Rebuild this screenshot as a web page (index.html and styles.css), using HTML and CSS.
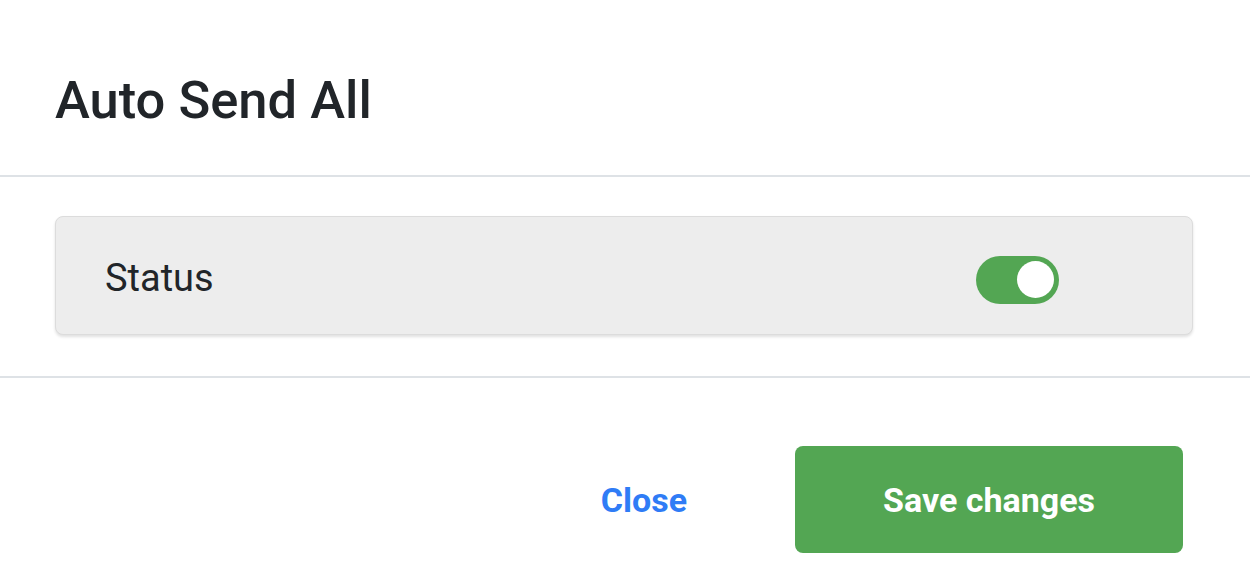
FILE: index.html
```html
<!DOCTYPE html>
<html lang="en">
<head>
<meta charset="utf-8">
<title>Auto Send All</title>
<link rel="stylesheet" href="styles.css">
</head>
<body>
<div class="modal">
  <header class="modal-header">
    <h1 class="modal-title">Auto Send All</h1>
  </header>
  <section class="modal-body">
    <div class="setting-card">
      <span class="setting-label">Status</span>
      <span class="toggle" role="switch" aria-checked="true"><span class="toggle-knob"></span></span>
    </div>
  </section>
  <footer class="modal-footer">
    <button class="btn-link" type="button">Close</button>
    <button class="btn-save" type="button">Save changes</button>
  </footer>
</div>
</body>
</html>
```
FILE: styles.css
```css
* { box-sizing: border-box; }
html, body { margin: 0; padding: 0; background: #fff; }
body {
  font-family: Roboto, "Liberation Sans", Arial, sans-serif;
  color: #212529;
  width: 1250px;
  height: 568px;
  overflow: hidden;
}
.modal-header {
  padding: 68px 55px 43px;
  border-bottom: 2px solid #dee2e6;
}
.modal-title {
  margin: 0;
  font-size: 52.5px;
  line-height: 64px;
  font-weight: 500;
  color: #212529;
}
.modal-body {
  padding: 39px 57px 41px 55px;
  border-bottom: 2px solid #dee2e6;
}
.setting-card {
  height: 119px;
  display: flex;
  align-items: center;
  padding: 0 0 0 49px;
  background: #ededed;
  border: 1px solid #dcdcdc;
  border-radius: 8px;
  box-shadow: 0 2px 3px rgba(0,0,0,0.12);
}
.setting-label {
  flex: 1;
  font-size: 38px;
  line-height: 44px;
  font-weight: 400;
  color: #212529;
  margin-top: 4px;
}
.toggle {
  width: 83px;
  height: 48px;
  margin: 8px 133px 0 0;
  border-radius: 24px;
  background: #53a653;
  display: flex;
  align-items: center;
  justify-content: flex-end;
  padding-right: 5px;
}
.toggle-knob {
  width: 37px;
  height: 37px;
  border-radius: 50%;
  background: #fff;
}
.modal-footer {
  display: flex;
  justify-content: flex-end;
  align-items: center;
  padding: 68px 67px 0 0;
}
.btn-link {
  border: 0;
  background: none;
  padding: 0;
  margin-right: 108px;
  font-family: Roboto, "Liberation Sans", Arial, sans-serif;
  font-size: 34px;
  font-weight: 700;
  color: #2f7cf6;
  cursor: pointer;
}
.btn-save {
  width: 388px;
  height: 107px;
  border: 0;
  border-radius: 8px;
  background: #53a653;
  color: #fff;
  font-family: Roboto, "Liberation Sans", Arial, sans-serif;
  font-size: 34px;
  font-weight: 700;
  cursor: pointer;
}
```
